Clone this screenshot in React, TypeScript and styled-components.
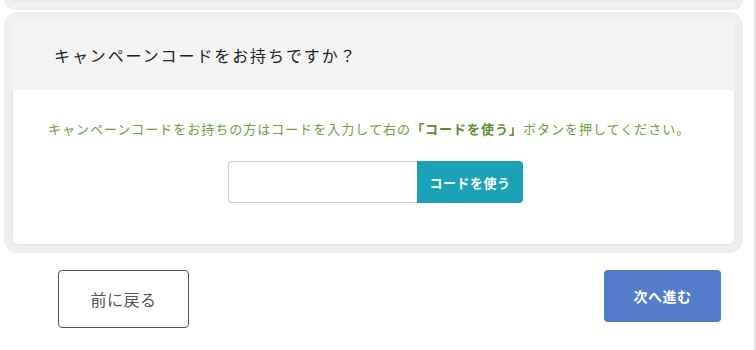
import React from 'react'
import styled, { createGlobalStyle } from 'styled-components'

const GlobalStyle = createGlobalStyle`
  html, body {
    margin: 0;
    padding: 0;
    background: #ffffff;
  }
  body {
    font-family: "Noto Sans CJK JP", "Noto Sans", sans-serif;
    color: #333333;
  }
`

const Page = styled.div`
  width: 756px;
  height: 350px;
  box-sizing: border-box;
  overflow: hidden;
  border-right: 2px solid #e2e2e2;
  padding-right: 1px;
`

const PrevCardTail = styled.div`
  height: 2px;
  margin: 0 10px 0 4px;
  border: 8px solid #efefef;
  border-top: none;
  border-radius: 0 0 14px 14px;
  background: #e8e8e8;
`

const Card = styled.section`
  margin: 2px 10px 0 4px;
  border: 8px solid #efefef;
  border-radius: 14px;
  overflow: hidden;
  background: #ffffff;
  box-shadow: inset 0 0 0 1px #e6e6e6;
`

const CardHeader = styled.div`
  height: 70px;
  display: flex;
  align-items: center;
  padding-left: 42px;
  background: #f4f4f4;
  font-size: 16px;
  letter-spacing: 1.9px;
  color: #222222;
`

const CardBody = styled.div`
  height: 155px;
  box-sizing: border-box;
  padding-top: 28px;
  display: flex;
  flex-direction: column;
  align-items: center;
`

const Note = styled.p`
  margin: 0;
  align-self: flex-start;
  padding-left: 36px;
  font-size: 13px;
  letter-spacing: 1px;
  line-height: 22px;
  color: #6c9e43;

  strong {
    color: #5a8f2e;
    font-weight: 700;
  }
`

const CodeRow = styled.div`
  display: flex;
  margin-top: 21px;
  margin-left: 4px;
`

const CodeInput = styled.input`
  width: 189px;
  height: 42px;
  box-sizing: border-box;
  border: 1px solid #cccccc;
  border-right: none;
  border-radius: 4px 0 0 4px;
  outline: none;
  padding: 0 10px;
  font-size: 14px;
`

const UseButton = styled.button`
  width: 106px;
  height: 42px;
  border: none;
  border-radius: 0 4px 4px 0;
  background: #1ba2b7;
  color: #ffffff;
  font-family: inherit;
  font-weight: 700;
  font-size: 13px;
  letter-spacing: 0.5px;
`

const Footer = styled.div`
  display: flex;
  justify-content: space-between;
  align-items: flex-start;
  padding: 17px 32px 0 58px;
`

const NavButton = styled.button<{ $primary?: boolean }>`
  box-sizing: border-box;
  font-family: inherit;
  border-radius: 4px;
  cursor: pointer;
  width: ${(p) => (p.$primary ? '117px' : '131px')};
  height: ${(p) => (p.$primary ? '52px' : '58px')};
  border: ${(p) => (p.$primary ? 'none' : '1px solid #555555')};
  background: ${(p) => (p.$primary ? '#537dcb' : '#ffffff')};
  color: ${(p) => (p.$primary ? '#ffffff' : '#555555')};
  font-weight: ${(p) => (p.$primary ? 700 : 400)};
  font-size: ${(p) => (p.$primary ? '14px' : '16px')};
  letter-spacing: 0.5px;
`

const App: React.FC = () => {
  return (
    <>
      <GlobalStyle />
      <Page>
        <PrevCardTail />
        <Card>
          <CardHeader>キャンペーンコードをお持ちですか？</CardHeader>
          <CardBody>
            <Note>
              キャンペーンコードをお持ちの方はコードを入力して右の
              <strong>「コードを使う」</strong>
              ボタンを押してください。
            </Note>
            <CodeRow>
              <CodeInput type="text" />
              <UseButton type="button">コードを使う</UseButton>
            </CodeRow>
          </CardBody>
        </Card>
        <Footer>
          <NavButton type="button">前に戻る</NavButton>
          <NavButton type="button" $primary>
            次へ進む
          </NavButton>
        </Footer>
      </Page>
    </>
  )
}

export default App
